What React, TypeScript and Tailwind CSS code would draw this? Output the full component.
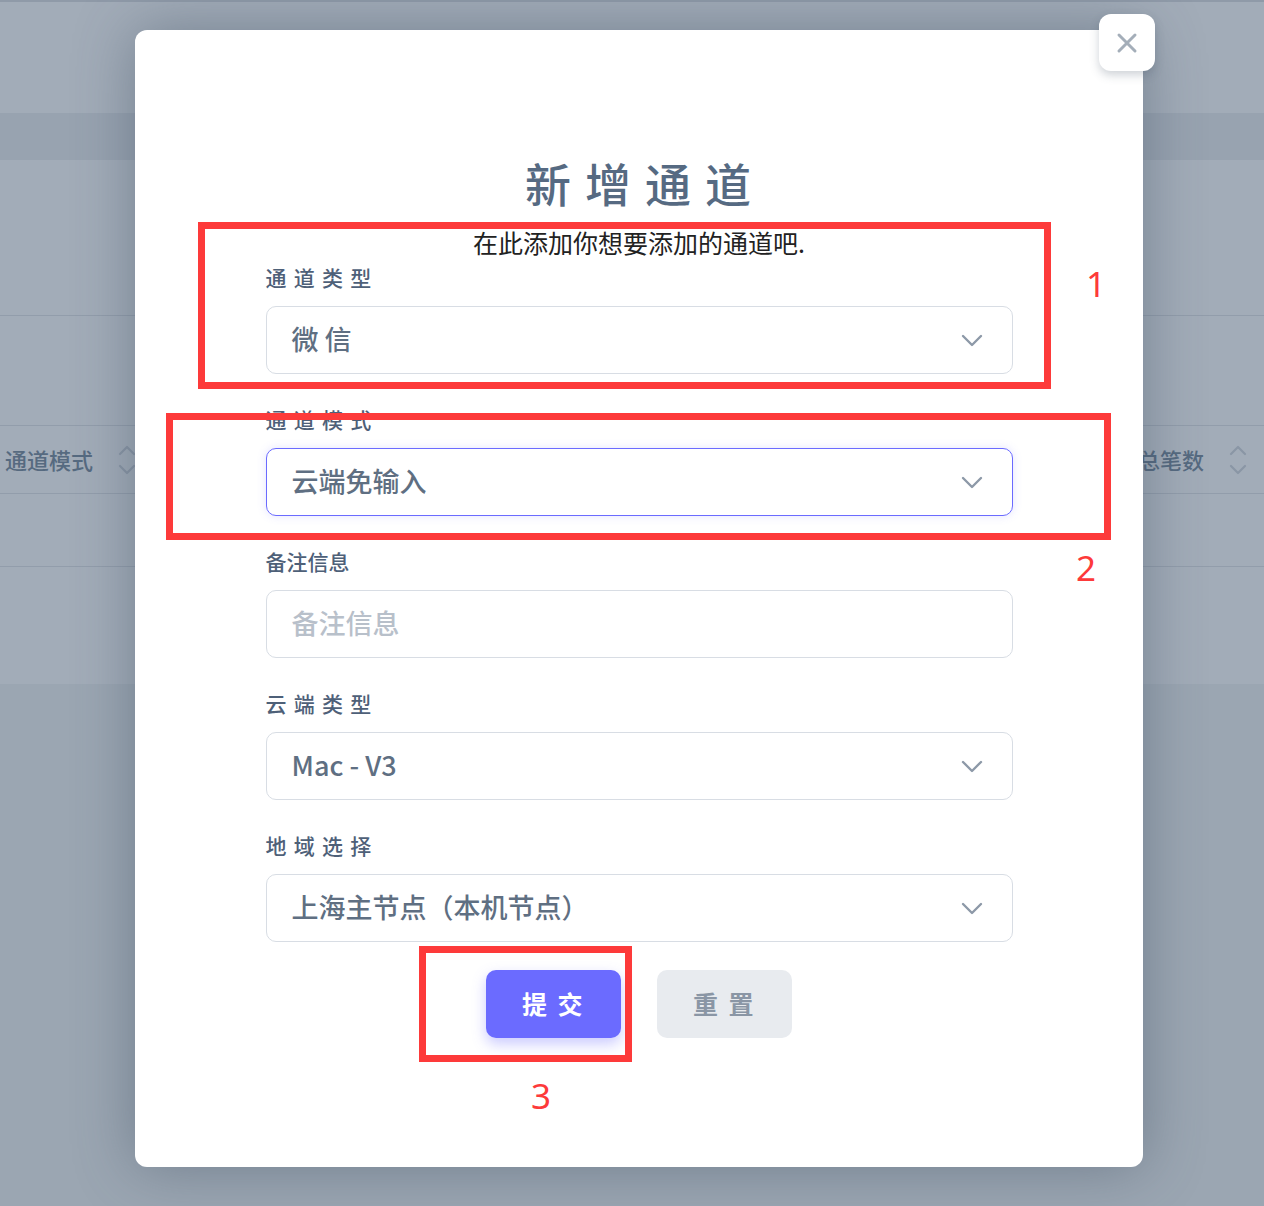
import React from "react";

const cjk = { fontFamily: '"Noto Sans CJK SC", "Noto Sans", sans-serif' };

function Chevron() {
    return (
        <svg width="22" height="14" viewBox="0 0 22 14" fill="none" className="shrink-0">
            <path d="M2 3l9 9 9-9" stroke="#8d99a8" strokeWidth="2.4" strokeLinecap="round" strokeLinejoin="round" />
        </svg>
    );
}

function SortIcon() {
    return (
        <svg width="18" height="34" viewBox="0 0 18 34" fill="none">
            <path d="M2 11l7-7 7 7" stroke="#8a96a5" strokeWidth="2.2" strokeLinecap="round" strokeLinejoin="round" />
            <path d="M2 23l7 7 7-7" stroke="#8a96a5" strokeWidth="2.2" strokeLinecap="round" strokeLinejoin="round" />
        </svg>
    );
}

function Field({ label, value, focused, placeholder, select = true, spaced = true }: FieldProps) {
    return (
        <div className="flex w-[747px] flex-col">
            <span className={`h-[24px] text-[21px] leading-[24px] font-medium text-[#4e6078] ${spaced ? "tracking-[0.06em]" : ""}`}>{label}</span>
            <div
                className={`mt-[17px] flex h-[68px] items-center justify-between rounded-[10px] border bg-white pl-[25px] pr-[29px] ${
                    focused ? "border-[#6b6bff] shadow-[0_0_10px_rgba(107,107,255,0.18)]" : "border-[#d8dde4]"
                }`}
            >
                <span className={`-mt-[2px] text-[27px] font-medium ${placeholder ? "text-[#b8c0ca]" : "text-[#5f6f82]"}`}>{value}</span>
                {select && <Chevron />}
            </div>
        </div>
    );
}

interface FieldProps {
    label: string;
    value: string;
    focused?: boolean;
    placeholder?: boolean;
    select?: boolean;
    spaced?: boolean;
}

export default function App() {
    return (
        <div className="relative h-[1206px] w-full overflow-hidden bg-[#9ba6b2]" style={cjk}>
            {/* dimmed page behind */}
            <div className="h-[2px] bg-[#8f9aa8]" />
            <div className="h-[111px] bg-[#a2acb8]" />
            <div className="h-[47px] bg-[#98a3b0]" />
            <div className="h-[155px] bg-[#a2acb8]" />
            <div className="h-[1px] bg-[#929dab]" />
            <div className="h-[109px] bg-[#a2acb8]" />
            <div className="h-[1px] bg-[#929dab]" />
            <div className="flex h-[67px] items-center justify-between bg-[#a2acb8] pr-[17px] pl-[5px]">
                <div className="flex items-center gap-[25px]">
                    <span className="text-[22px] font-medium text-[#566a80]">通道模式</span>
                    <SortIcon />
                </div>
                <div className="flex items-center gap-[25px]">
                    <span className="text-[22px] font-medium text-[#566a80]">总笔数</span>
                    <SortIcon />
                </div>
            </div>
            <div className="h-[1px] bg-[#929dab]" />
            <div className="h-[72px] bg-[#a2acb8]" />
            <div className="h-[1px] bg-[#929dab]" />
            <div className="h-[117px] bg-[#a2acb8]" />

            {/* modal */}
            <div className="absolute top-[30px] left-[135px] flex h-[1137px] w-[1008px] flex-col items-center rounded-[12px] bg-white pt-[124px] shadow-[0_0_60px_rgba(60,75,95,0.45)]">
                <button className="absolute -top-[16px] -right-[12px] flex h-[57px] w-[56px] items-center justify-center rounded-[12px] bg-white shadow-[0_4px_10px_rgba(60,75,95,0.25)]">
                    <svg width="22" height="22" viewBox="0 0 22 22" fill="none">
                        <path d="M3 3l16 16M19 3L3 19" stroke="#a4aeb9" strokeWidth="3" strokeLinecap="round" />
                    </svg>
                </button>

                <h2 className="h-[56px] text-[46px] leading-[56px] font-medium tracking-[0.04em] text-[#566a82]">新 增 通 道</h2>
                <p className="mt-[18px] h-[28px] text-[25px] leading-[28px] text-[#222]">在此添加你想要添加的通道吧.</p>

                <div className="mt-[9px] flex flex-col gap-[33px]">
                    <Field label="通 道 类 型" value="微 信" />
                    <Field label="通 道 模 式" value="云端免输入" focused />
                    <Field label="备注信息" value="备注信息" placeholder select={false} spaced={false} />
                    <Field label="云 端 类 型" value="Mac - V3" />
                    <Field label="地 域 选 择" value="上海主节点（本机节点）" />
                </div>

                <div className="mt-[28px] flex gap-[36px]">
                    <button className="flex h-[68px] w-[135px] items-center justify-center rounded-[10px] bg-[#6b6bff] text-[25px] font-bold tracking-[0.1em] text-white shadow-[0_6px_14px_rgba(107,107,255,0.35)]">
                        提 交
                    </button>
                    <button className="flex h-[68px] w-[135px] items-center justify-center rounded-[10px] bg-[#e8ebef] text-[25px] font-bold tracking-[0.1em] text-[#8a96a5]">
                        重 置
                    </button>
                </div>
            </div>

            {/* annotations */}
            <div className="absolute top-[222px] left-[198px] h-[167px] w-[853px] border-[7px] border-[#fd3a3a]" />
            <div className="absolute top-[413px] left-[166px] h-[127px] w-[945px] border-[7px] border-[#fd3a3a]" />
            <div className="absolute top-[946px] left-[419px] h-[116px] w-[213px] border-[7px] border-[#fd3a3a]" />
            <span className="absolute top-[264px] left-[1086px] text-[35px] leading-[40px] text-[#fd3a3a]" style={{ fontFamily: '"Noto Sans", sans-serif' }}>1</span>
            <span className="absolute top-[548px] left-[1076px] text-[35px] leading-[40px] text-[#fd3a3a]" style={{ fontFamily: '"Noto Sans", sans-serif' }}>2</span>
            <span className="absolute top-[1076px] left-[531px] text-[35px] leading-[40px] text-[#fd3a3a]" style={{ fontFamily: '"Noto Sans", sans-serif' }}>3</span>
        </div>
    );
}
